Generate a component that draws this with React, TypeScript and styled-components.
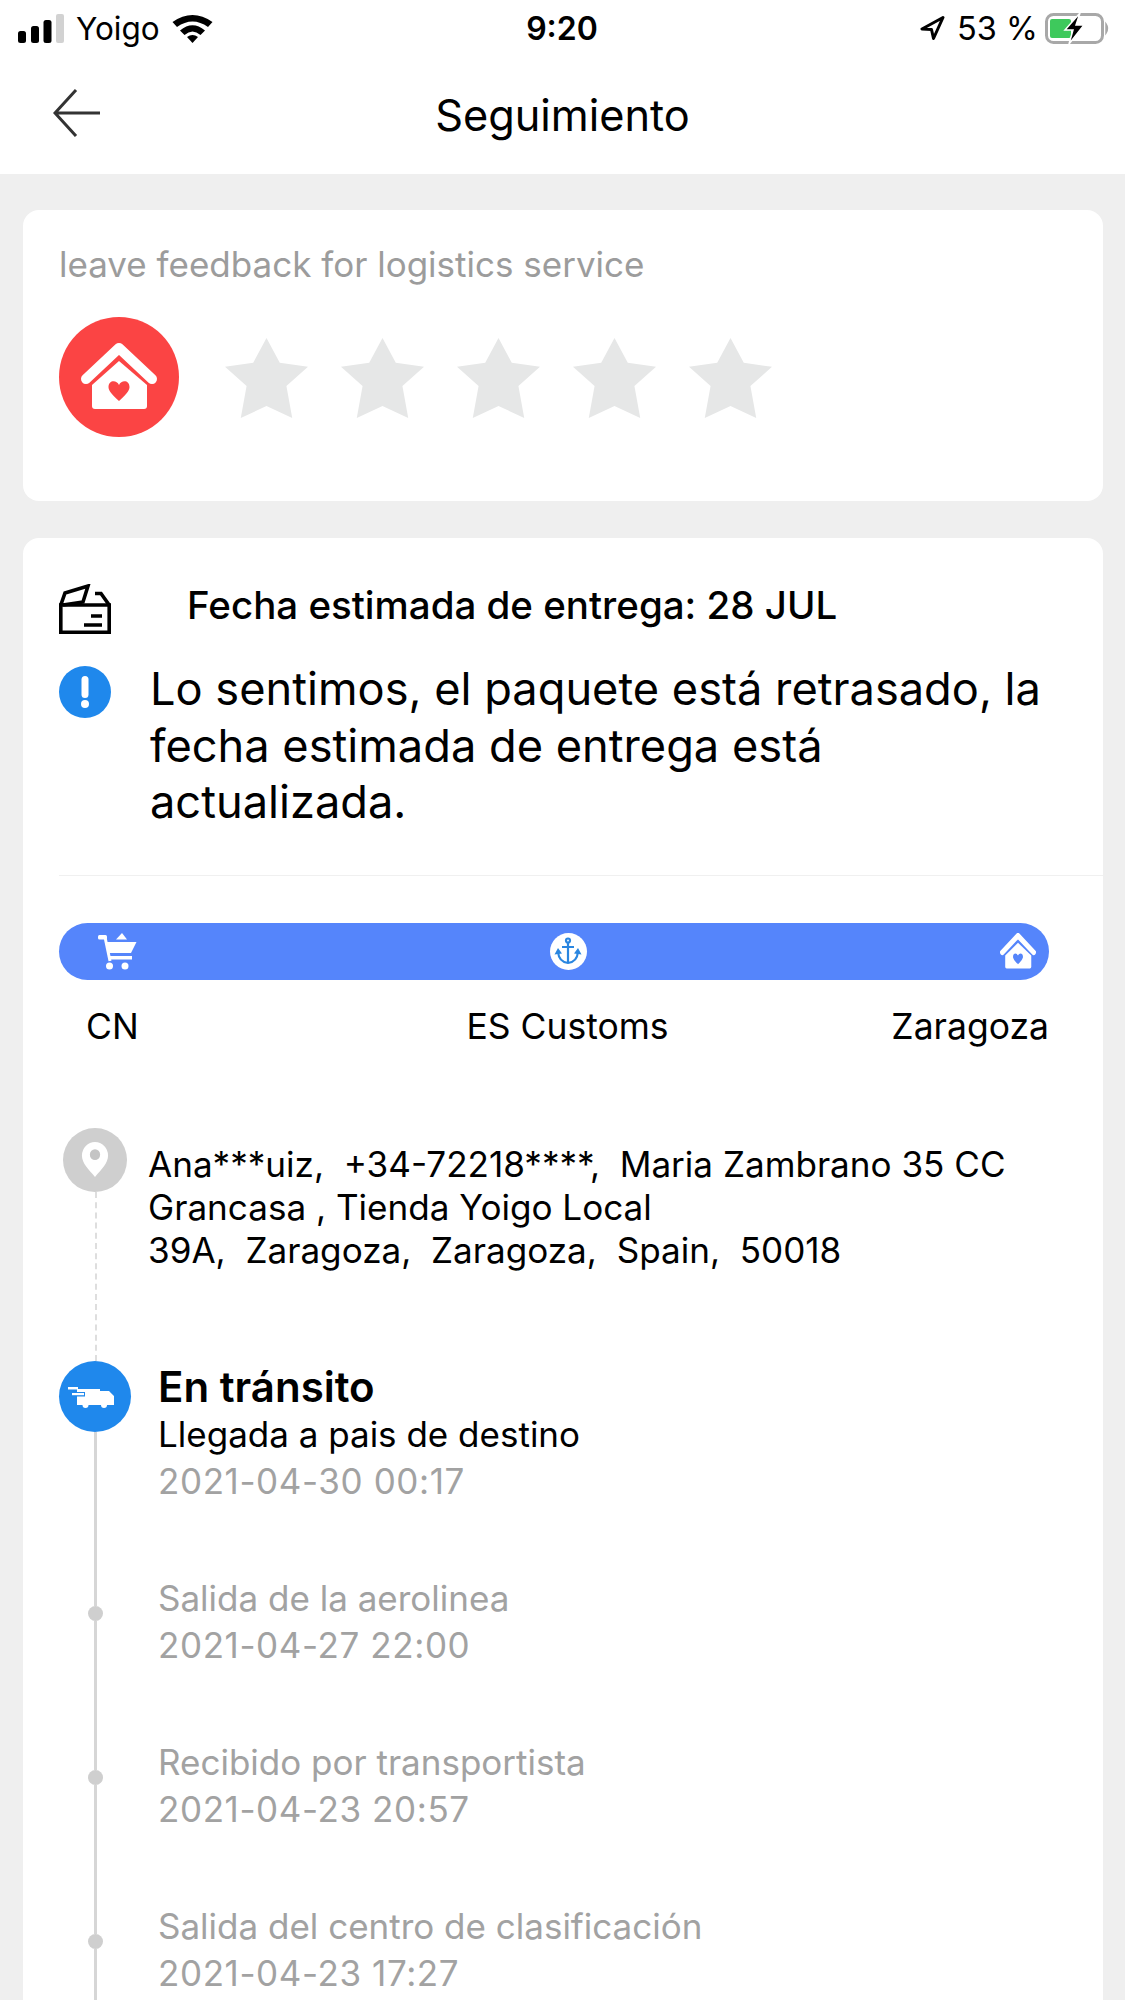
import styled, { createGlobalStyle } from "styled-components";

const GlobalStyle = createGlobalStyle`
  html, body {
    margin: 0;
    padding: 0;
    background: #efefef;
  }
  * {
    box-sizing: border-box;
  }
`;

const Page = styled.div`
  width: 1125px;
  height: 2000px;
  overflow: hidden;
  background: #efefef;
  font-family: Inter, "Liberation Sans", sans-serif;
  color: #000;
`;

const Header = styled.header`
  background: #fff;
  height: 174px;
`;

const StatusBar = styled.div`
  height: 56px;
  display: grid;
  grid-template-columns: 1fr auto 1fr;
  align-items: center;
  padding: 0 15px 0 18px;
  font-size: 31.5px;
`;

const StatusLeft = styled.div`
  display: flex;
  align-items: center;
  gap: 12px;
`;

const StatusRight = styled.div`
  display: flex;
  align-items: center;
  justify-content: flex-end;
  gap: 7px;
  font-size: 32.5px;
`;

const LocationSlot = styled.div`
  display: flex;
  margin-right: 5px;
`;

const Time = styled.div`
  font-weight: 600;
  font-size: 32px;
  margin-right: 4px;
`;

const NavBar = styled.div`
  height: 118px;
  display: flex;
  align-items: center;
  justify-content: center;
  position: relative;
`;

const BackButton = styled.div`
  position: absolute;
  left: 53px;
  top: 33px;
  display: flex;
`;

const Title = styled.h1`
  margin: 0;
  font-size: 43.3px;
  font-weight: 400;
`;

const Card = styled.section`
  background: #fff;
  border-radius: 16px;
  margin: 36px 22px 0 23px;
  padding-left: 36px;
`;

const FeedbackCard = styled(Card)`
  height: 291px;
  padding-top: 32px;
`;

const FeedbackText = styled.div`
  font-size: 35px;
  line-height: 44px;
  color: #9c9c9c;
`;

const RatingRow = styled.div`
  display: flex;
  align-items: flex-start;
  margin-top: 31px;
`;

const LogoCircle = styled.div`
  width: 120px;
  height: 120px;
  border-radius: 50%;
  background: #fb4444;
  flex: none;
  display: flex;
`;

const Stars = styled.div`
  display: flex;
  gap: 33px;
  margin: 21px 0 0 46px;
`;

const TrackingCard = styled(Card)`
  margin-top: 37px;
  padding-top: 46px;
  height: 1600px;
`;

const EstimateRow = styled.div`
  display: flex;
  align-items: center;
  height: 50px;
`;

const EstimateText = styled.div`
  margin: 0 0 8px 76px;
  font-size: 38.5px;
  font-weight: 500;
`;

const NoticeRow = styled.div`
  display: flex;
  align-items: flex-start;
  margin-top: 27px;
`;

const NoticeText = styled.div`
  margin-left: 39px;
  font-size: 45.2px;
  line-height: 56.5px;
  white-space: nowrap;
`;

const InfoBadge = styled.div`
  width: 52px;
  height: 52px;
  margin-top: 5px;
  border-radius: 50%;
  background: #1f88ec;
  flex: none;
  display: flex;
`;

const Divider = styled.hr`
  margin: 44px 0 0;
  border: none;
  height: 1px;
  background: #f0f0f0;
`;

const RouteBar = styled.div`
  width: 990px;
  height: 57px;
  margin-top: 47px;
  border-radius: 29px;
  background: #5585fb;
  display: flex;
  align-items: center;
  justify-content: space-between;
  padding: 0 13px 0 39px;
`;

const AnchorBadge = styled.div`
  width: 37px;
  height: 37px;
  border-radius: 50%;
  background: #fff;
  flex: none;
  display: flex;
`;

const RouteLabels = styled.div`
  width: 990px;
  margin-top: 25px;
  padding-left: 27px;
  display: grid;
  grid-template-columns: 1fr auto 1fr;
  font-size: 35.5px;
  line-height: 44px;
`;

const RouteLabel = styled.div<{ $end?: boolean }>`
  text-align: ${(p) => (p.$end ? "right" : "left")};
`;

const AddressRow = styled.div`
  display: grid;
  grid-template-columns: 72px 1fr;
  column-gap: 17px;
  height: 233px;
  margin-top: 79px;
`;

const Rail = styled.div`
  display: flex;
  flex-direction: column;
  align-items: center;
`;

const PinCircle = styled.div`
  width: 64px;
  height: 64px;
  border-radius: 50%;
  background: #cfcfcf;
  flex: none;
  display: flex;
  align-items: center;
  justify-content: center;
`;

const DashedLine = styled.div`
  flex: 1;
  border-left: 2px dashed #dedede;
  margin-left: 1px;
`;

const SolidLine = styled.div<{ $fixed?: number }>`
  width: 3px;
  background: #d6d6d6;
  flex: ${(p) => (p.$fixed ? `0 0 ${p.$fixed}px` : "1")};
`;

const AddressText = styled.div`
  font-size: 35.1px;
  line-height: 43px;
  padding-top: 15px;
  white-space: pre;
`;

const EventRow = styled.div<{ $height: number }>`
  display: grid;
  grid-template-columns: 72px 1fr;
  column-gap: 27px;
  height: ${(p) => p.$height}px;
`;

const TruckCircle = styled.div`
  width: 72px;
  height: 71px;
  border-radius: 50%;
  background: #1f88ec;
  flex: none;
  display: flex;
`;

const Dot = styled.div`
  width: 15px;
  height: 15px;
  border-radius: 50%;
  background: #cfcfcf;
  flex: none;
`;

const EventTitle = styled.div`
  font-size: 42px;
  font-weight: 600;
  line-height: 49px;
  padding-top: 1px;
`;

const EventLine = styled.div<{ $muted?: boolean }>`
  font-size: 35px;
  line-height: 47px;
  color: ${(p) => (p.$muted ? "#a2a2a2" : "#000")};
`;

const EventDate = styled(EventLine)`
  letter-spacing: 0.6px;
`;

const SignalIcon = () => (
  <svg width="46" height="29" viewBox="0 0 46 29">
    <rect x="0" y="17" width="8" height="12" rx="2.5" fill="#000" />
    <rect x="13" y="12" width="8" height="17" rx="2.5" fill="#000" />
    <rect x="25.5" y="6" width="8" height="23" rx="2.5" fill="#000" />
    <rect x="38" y="0" width="8" height="29" rx="2" fill="#d2d2d2" />
  </svg>
);

const WifiIcon = () => (
  <svg width="41" height="30" viewBox="0 0 41 30" fill="#000">
    <path d="M0.5 9 Q20.5 -5 40.5 9 L36 14 Q20.5 3 5 14 Z" />
    <path d="M8 17.5 Q20.5 7 33 17.5 L28.5 22 Q20.5 15 12.5 22 Z" />
    <path d="M15 24 Q20.5 20 26 24 L20.5 30 Z" />
  </svg>
);

const LocationIcon = () => (
  <svg width="25" height="24" viewBox="0 0 25 24">
    <path d="M23 1.5 L2 13 L11.5 13.5 L13.5 22.5 Z" fill="none" stroke="#000" strokeWidth="3" strokeLinejoin="round" />
  </svg>
);

const BatteryIcon = () => (
  <svg width="65" height="31" viewBox="0 0 65 31">
    <rect x="1.5" y="1.5" width="56" height="28" rx="7" fill="none" stroke="#a8a8a8" strokeWidth="3" />
    <rect x="5" y="6" width="21" height="19" rx="2" fill="#3ec95c" />
    <path d="M61 11 q3 4.5 0 9 z" fill="#a8a8a8" stroke="#a8a8a8" strokeWidth="1.5" />
    <path d="M35 0 L20 17 H28 L24 31 L39 12 H31 Z" fill="#000" stroke="#fff" strokeWidth="1.5" />
  </svg>
);

const BackArrow = () => (
  <svg width="48" height="48" viewBox="0 0 48 48">
    <path d="M23 1 L2 24 L23 47 M2 24 H47" fill="none" stroke="#333" strokeWidth="3" />
  </svg>
);

const HouseIcon = ({
  width,
  height,
  viewBox,
  heart,
}: {
  width: number;
  height: number;
  viewBox: string;
  heart: string;
}) => (
  <svg width={width} height={height} viewBox={viewBox} preserveAspectRatio="none">
    <path d="M27 62 L60 31 L93 62" fill="none" stroke="#fff" strokeWidth="10" strokeLinecap="round" strokeLinejoin="round" />
    <path d="M33 68 L60 44 L88 68 V89 a3 3 0 0 1 -3 3 H36 a3 3 0 0 1 -3 -3 Z" fill="#fff" />
    <path d="M60 84 C52 77 49.5 73 49.5 70 C49.5 63 57.5 62.5 60 68 C62.5 62.5 70.5 63 70.5 70 C70.5 73 68 77 60 84 Z" fill={heart} />
  </svg>
);

const Star = () => (
  <svg width="83" height="80" viewBox="0 0 100 100" preserveAspectRatio="none">
    <polygon points="50,0 66,31 100,36 74,60 81,100 50,85 19,100 26,60 0,36 34,31" fill="#e6e7e7" />
  </svg>
);

const ParcelIcon = () => (
  <svg width="52" height="50" viewBox="0 0 52 50" fill="none" stroke="#000" strokeWidth="3.6">
    <path d="M1.8 21 H50.2 V48.2 H1.8 Z" />
    <path d="M1.8 21 L6 9 L29 2 L24 18 L4 21" />
    <path d="M36 9.5 H42 L50.2 21" />
    <path d="M32 32 H43 M25 41 H43" />
  </svg>
);

const ExclamationIcon = () => (
  <svg width="52" height="52" viewBox="0 0 52 52">
    <rect x="22.5" y="10" width="7" height="22" rx="3.5" fill="#fff" />
    <circle cx="26" cy="38" r="4" fill="#fff" />
  </svg>
);

const CartIcon = () => (
  <svg width="39" height="37" viewBox="0 0 39 37" fill="#fff">
    <rect x="0" y="2" width="9" height="4.5" rx="1.5" />
    <path d="M7 4 L12 28" fill="none" stroke="#fff" strokeWidth="3" />
    <path d="M8 9 H38.5 L33 20 H10 Z" />
    <rect x="11" y="23" width="23" height="3.5" />
    <path d="M18 6.5 L24 0 L29 6.5 Z" />
    <circle cx="11.5" cy="33" r="3.5" />
    <circle cx="27" cy="33" r="3.5" />
  </svg>
);

const AnchorIcon = () => (
  <svg width="37" height="37" viewBox="0 0 37 37" fill="none" stroke="#2a86e0" strokeWidth="2.2">
    <circle cx="18" cy="7.5" r="2" />
    <path d="M18 9 V30 M12 14 H24" />
    <path d="M8 19 Q9 29 18 30 Q27 29 28 19" />
    <path d="M4.5 21.5 L8 15 L12 20.5 Z M31.5 21.5 L28 15 L24 20.5 Z" fill="#2a86e0" stroke="none" />
  </svg>
);

const PinIcon = () => (
  <svg width="28" height="37" viewBox="0 0 30 38" preserveAspectRatio="none">
    <path d="M15 37 C8 29 1 23 1 15 A14 14 0 0 1 29 15 C29 23 22 29 15 37 Z" fill="#fff" />
    <circle cx="15" cy="14" r="5.5" fill="#c4c4c4" />
  </svg>
);

const TruckIcon = () => (
  <svg width="72" height="71" viewBox="0 0 72 71">
    <path d="M18 28 H41 V30 H50 L55 35 V44 H18 Z" fill="#fff" />
    <rect x="17" y="31" width="9" height="4.5" fill="#1f88ec" />
    <rect x="9" y="26" width="10" height="2.5" fill="#fff" />
    <rect x="13" y="32" width="12" height="2.2" fill="#fff" />
    <circle cx="26.5" cy="44" r="3" fill="#fff" />
    <circle cx="45" cy="44" r="3" fill="#fff" />
  </svg>
);

const events = [
  { title: "Salida de la aerolinea", date: "2021-04-27 22:00" },
  { title: "Recibido por transportista", date: "2021-04-23 20:57" },
  { title: "Salida del centro de clasificación", date: "2021-04-23 17:27" },
];

const App = () => {
  return (
    <Page>
      <GlobalStyle />
      <Header>
        <StatusBar>
          <StatusLeft>
            <SignalIcon />
            <span>Yoigo</span>
            <WifiIcon />
          </StatusLeft>
          <Time>9:20</Time>
          <StatusRight>
            <LocationSlot>
              <LocationIcon />
            </LocationSlot>
            <span>53 %</span>
            <BatteryIcon />
          </StatusRight>
        </StatusBar>
        <NavBar>
          <BackButton>
            <BackArrow />
          </BackButton>
          <Title>Seguimiento</Title>
        </NavBar>
      </Header>

      <FeedbackCard>
        <FeedbackText>leave feedback for logistics service</FeedbackText>
        <RatingRow>
          <LogoCircle>
            <HouseIcon width={120} height={120} viewBox="0 0 120 120" heart="#fb4444" />
          </LogoCircle>
          <Stars>
            {[0, 1, 2, 3, 4].map((i) => (
              <Star key={i} />
            ))}
          </Stars>
        </RatingRow>
      </FeedbackCard>

      <TrackingCard>
        <EstimateRow>
          <ParcelIcon />
          <EstimateText>Fecha estimada de entrega: 28 JUL</EstimateText>
        </EstimateRow>
        <NoticeRow>
          <InfoBadge>
            <ExclamationIcon />
          </InfoBadge>
          <NoticeText>
            Lo sentimos, el paquete está retrasado, la
            <br />
            fecha estimada de entrega está
            <br />
            actualizada.
          </NoticeText>
        </NoticeRow>
        <Divider />
        <RouteBar>
          <CartIcon />
          <AnchorBadge>
            <AnchorIcon />
          </AnchorBadge>
          <HouseIcon width={36} height={36} viewBox="22 26 76 67" heart="#5585fb" />
        </RouteBar>
        <RouteLabels>
          <RouteLabel>CN</RouteLabel>
          <RouteLabel>ES Customs</RouteLabel>
          <RouteLabel $end>Zaragoza</RouteLabel>
        </RouteLabels>

        <AddressRow>
          <Rail>
            <PinCircle>
              <PinIcon />
            </PinCircle>
            <DashedLine />
          </Rail>
          <AddressText>
            {"Ana***uiz,  +34-72218****,  Maria Zambrano 35 CC\nGrancasa , Tienda Yoigo Local\n39A,  Zaragoza,  Zaragoza,  Spain,  50018"}
          </AddressText>
        </AddressRow>

        <EventRow $height={214}>
          <Rail>
            <TruckCircle>
              <TruckIcon />
            </TruckCircle>
            <SolidLine />
          </Rail>
          <div>
            <EventTitle>En tránsito</EventTitle>
            <EventLine>Llegada a pais de destino</EventLine>
            <EventDate $muted>2021-04-30 00:17</EventDate>
          </div>
        </EventRow>

        {events.map((event) => (
          <EventRow $height={164} key={event.date}>
            <Rail>
              <SolidLine $fixed={31} />
              <Dot />
              <SolidLine />
            </Rail>
            <div>
              <EventLine $muted>{event.title}</EventLine>
              <EventDate $muted>{event.date}</EventDate>
            </div>
          </EventRow>
        ))}
      </TrackingCard>
    </Page>
  );
};

export default App;
